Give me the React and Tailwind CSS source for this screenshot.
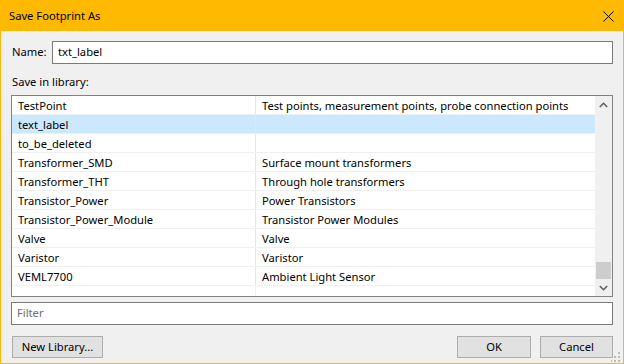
import React from "react";

const rows = [
  ["TestPoint", "Test points, measurement points, probe connection points"],
  ["text_label", ""],
  ["to_be_deleted", ""],
  ["Transformer_SMD", "Surface mount transformers"],
  ["Transformer_THT", "Through hole transformers"],
  ["Transistor_Power", "Power Transistors"],
  ["Transistor_Power_Module", "Transistor Power Modules"],
  ["Valve", "Valve"],
  ["Varistor", "Varistor"],
  ["VEML7700", "Ambient Light Sensor"],
];

function Chevron({ up }) {
  return (
    <svg width="9" height="6" viewBox="0 0 9 6">
      <path
        d={up ? "M0.8 5 L4.5 1.3 L8.2 5" : "M0.8 1 L4.5 4.7 L8.2 1"}
        fill="none"
        stroke="#606060"
        strokeWidth="1.6"
      />
    </svg>
  );
}

export default function App() {
  return (
    <div className="relative w-[624px] h-[364px] bg-[#f0f0f0] border border-[#ffb900] flex flex-col text-[11.2px] text-black font-['Segoe_UI','Noto_Sans',sans-serif] overflow-hidden">
      <div className="h-[30px] bg-[#ffb900] flex items-center justify-between pl-[8px] pr-[9px] shrink-0">
        <span className="leading-none">Save Footprint As</span>
        <svg width="11" height="11" viewBox="0 0 11 11">
          <path d="M0.5 0.5 L10.5 10.5 M10.5 0.5 L0.5 10.5" stroke="#000" strokeWidth="1" />
        </svg>
      </div>
      <div className="flex flex-col px-[10px]">
        <div className="mt-[10px] h-[23px] flex items-center">
          <span className="w-[41px] pl-[1px]">Name:</span>
          <div className="flex-1 h-[23px] border border-[#7a7a7a] bg-white flex items-center pl-[5px]">
            txt_label
          </div>
        </div>
        <div className="mt-[10px] h-[16px] leading-[16px] pl-[1px]">Save in library:</div>
        <div className="mt-[5px] h-[202px] border border-[#828282] bg-white flex">
          <div className="flex-1 relative flex flex-col">
            {rows.map(([a, b], i) => (
              <div
                key={a}
                className={
                  "h-[19px] flex border-b border-[#f0f0f0] " +
                  (i === 1 ? "bg-[#cce8ff]" : "")
                }
              >
                <div className="w-[244px] pl-[6px] pt-[1px] border-r border-[#e5e5e5] leading-[17px] whitespace-nowrap">
                  {a}
                </div>
                <div className="flex-1 pl-[6px] pt-[1px] leading-[17px] whitespace-nowrap">{b}</div>
              </div>
            ))}
            <div className="flex-1 flex">
              <div className="w-[244px] border-r border-[#eef3fb]" />
            </div>
          </div>
          <div className="w-[17px] bg-[#f0f0f0] flex flex-col">
            <div className="h-[17px] flex items-center justify-center">
              <Chevron up />
            </div>
            <div className="flex-1 flex flex-col justify-end">
              <div className="h-[17px] mx-[1px] bg-[#cdcdcd]" />
            </div>
            <div className="h-[17px] flex items-center justify-center">
              <Chevron />
            </div>
          </div>
        </div>
        <div className="mt-[5px] h-[23px] border border-[#7a7a7a] bg-white flex items-center pl-[5px] text-[#6d6d6d]">
          Filter
        </div>
        <div className="mt-[11px] h-[22px] flex">
          <button className="ml-[1px] w-[91px] h-[22px] bg-[#e1e1e1] border border-[#adadad] flex items-center justify-center">
            New Library...
          </button>
          <div className="flex-1" />
          <button className="w-[74px] h-[22px] bg-[#e1e1e1] border border-[#adadad] flex items-center justify-center">
            OK
          </button>
          <button className="ml-[9px] w-[73px] h-[22px] bg-[#e1e1e1] border border-[#adadad] flex items-center justify-center">
            Cancel
          </button>
        </div>
      </div>
      <svg className="absolute right-[2px] bottom-[1px]" width="10" height="10" viewBox="0 0 10 10">
        <rect x="7" y="0" width="2" height="2" fill="#bcbcbc" />
        <rect x="3" y="4" width="2" height="2" fill="#bcbcbc" />
        <rect x="7" y="4" width="2" height="2" fill="#bcbcbc" />
        <rect x="-1" y="8" width="2" height="2" fill="#bcbcbc" />
        <rect x="3" y="8" width="2" height="2" fill="#bcbcbc" />
        <rect x="7" y="8" width="2" height="2" fill="#bcbcbc" />
      </svg>
    </div>
  );
}
